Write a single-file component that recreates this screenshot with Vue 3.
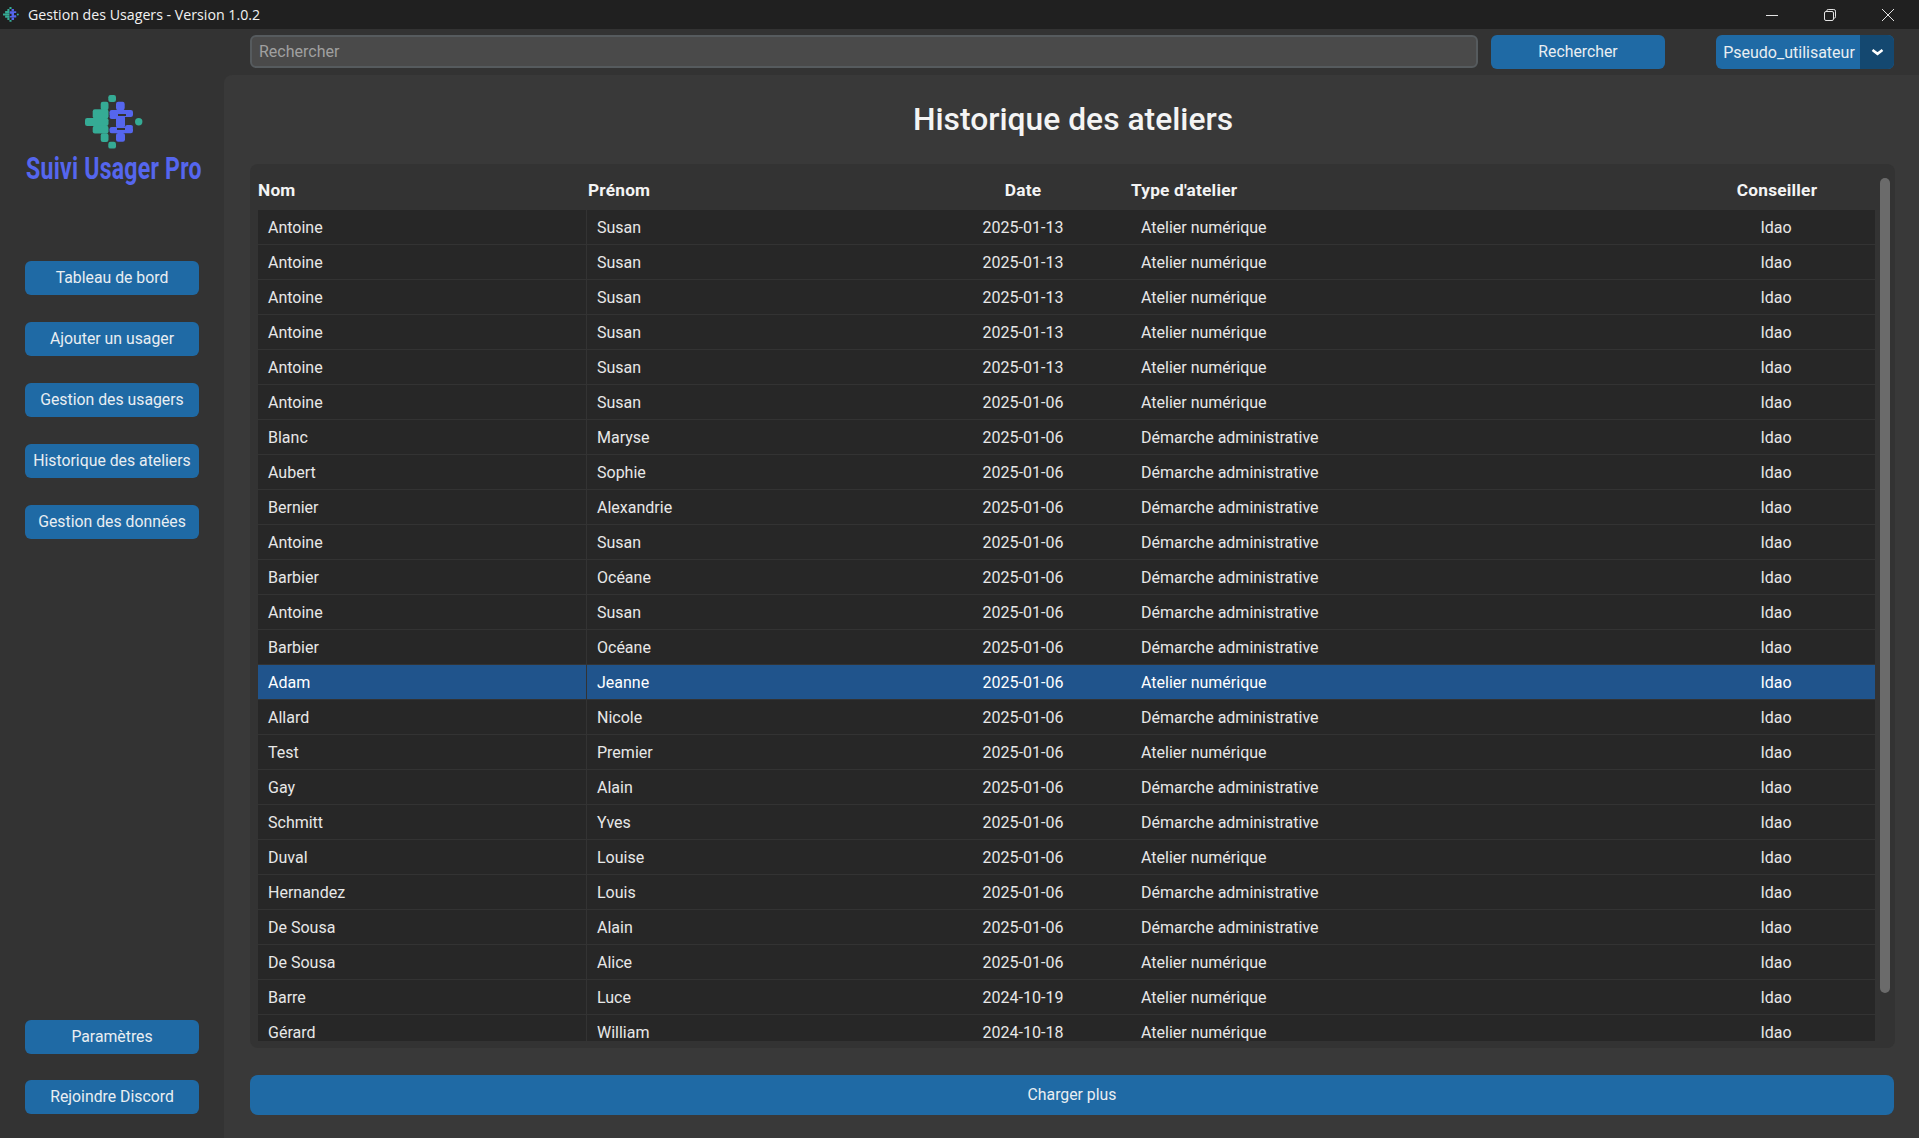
<template>
  <div class="window">
    <div class="titlebar">
      <svg class="app-icon" viewBox="0 0 58 54">
        <rect v-for="(r, i) in logoGreen" :key="i" :x="r[0]" :y="r[1]" :width="r[2]" :height="r[3]" rx="1" fill="#35ab95" />
        <circle cx="53.7" cy="26.7" r="3.7" fill="#35ab95" />
        <rect v-for="(r, i) in logoBlue" :key="i" :x="r[0]" :y="r[1]" :width="r[2]" :height="r[3]" rx="1" fill="#5566ee" />
      </svg>
      <span class="win-title">Gestion des Usagers - Version 1.0.2</span>
      <div class="win-controls">
        <svg viewBox="0 0 12 12" class="ctrl"><path d="M0 6.5h12" /></svg>
        <svg viewBox="0 0 12 12" class="ctrl"><rect x="0.5" y="2.5" width="9" height="9" rx="1.5" /><path d="M2.8 2.3V1.8Q2.8.5 4.2.5h5.6q1.7 0 1.7 1.7v5.6q0 1.4-1.3 1.4" /></svg>
        <svg viewBox="0 0 12 12" class="ctrl"><path d="M0 0l12 12M12 0L0 12" /></svg>
      </div>
    </div>

    <div class="body">
      <aside class="sidebar">
        <div class="brand">
          <svg class="logo" viewBox="0 0 58 54">
            <rect v-for="(r, i) in logoGreen" :key="i" :x="r[0]" :y="r[1]" :width="r[2]" :height="r[3]" rx="2.2" fill="#35ab95" />
            <circle cx="53.7" cy="26.7" r="3.7" fill="#35ab95" />
            <rect v-for="(r, i) in logoBlue" :key="i" :x="r[0]" :y="r[1]" :width="r[2]" :height="r[3]" rx="2.2" fill="#5566ee" />
            <path d="M33 20h8M32 34h8" stroke="#333333" stroke-width="2" />
          </svg>
          <div class="brand-name">Suivi Usager Pro</div>
        </div>

        <nav class="nav">
          <button v-for="b in navTop" :key="b" class="btn side-btn">{{ b }}</button>
        </nav>

        <div class="nav-bottom">
          <button v-for="b in navBottom" :key="b" class="btn side-btn">{{ b }}</button>
        </div>
      </aside>

      <div class="content">
        <div class="topbar">
          <input class="search" type="text" placeholder="Rechercher" />
          <button class="btn search-btn">Rechercher</button>
          <div class="user-menu">
            <span class="user-name">Pseudo_utilisateur</span>
            <span class="user-arrow">
              <svg viewBox="0 0 13 9"><path d="M1.5 2l5 3.8 5-3.8" /></svg>
            </span>
          </div>
        </div>

        <main class="panel">
          <h1>Historique des ateliers</h1>

          <div class="table-frame">
            <div class="table-wrap">
              <div class="thead">
                <div class="th">Nom</div>
                <div class="th">Prénom</div>
                <div class="th center">Date</div>
                <div class="th">Type d'atelier</div>
                <div class="th center">Conseiller</div>
              </div>
              <div class="tbody">
                <div v-for="(r, i) in rows" :key="i" class="tr" :class="{ selected: i === 13 }">
                  <div class="td">{{ r[0] }}</div>
                  <div class="td first">{{ r[1] }}</div>
                  <div class="td center">{{ r[2] }}</div>
                  <div class="td">{{ r[3] === 'N' ? 'Atelier numérique' : 'Démarche administrative' }}</div>
                  <div class="td center">Idao</div>
                </div>
              </div>
            </div>
            <div class="scrollbar"><div class="thumb"></div></div>
          </div>

          <button class="btn load-more">Charger plus</button>
        </main>
      </div>
    </div>
  </div>
</template>

<script setup>
const navTop = ['Tableau de bord', 'Ajouter un usager', 'Gestion des usagers', 'Historique des ateliers', 'Gestion des données']
const navBottom = ['Paramètres', 'Rejoindre Discord']

// x, y, w, h of the logo blocks
const logoGreen = [
  [23.3, 0, 7.7, 6.9],
  [15.7, 6.7, 7.8, 8.4],
  [7.7, 14.3, 15.8, 9.2],
  [0, 23, 23.5, 8],
  [7.7, 30.7, 15.8, 7.8],
  [15.7, 38.3, 7.8, 8.6],
  [23.3, 46.7, 7.7, 6.9],
]
const logoBlue = [
  [31, 6.7, 8.7, 8.6],
  [24.5, 15, 23.5, 7],
  [24.5, 20, 8, 4],
  [31, 20, 9, 13],
  [40, 30, 8, 4],
  [24.5, 32, 23.5, 6.3],
  [31, 38, 9, 8.7],
]

const rows = [
  ['Antoine', 'Susan', '2025-01-13', 'N'],
  ['Antoine', 'Susan', '2025-01-13', 'N'],
  ['Antoine', 'Susan', '2025-01-13', 'N'],
  ['Antoine', 'Susan', '2025-01-13', 'N'],
  ['Antoine', 'Susan', '2025-01-13', 'N'],
  ['Antoine', 'Susan', '2025-01-06', 'N'],
  ['Blanc', 'Maryse', '2025-01-06', 'D'],
  ['Aubert', 'Sophie', '2025-01-06', 'D'],
  ['Bernier', 'Alexandrie', '2025-01-06', 'D'],
  ['Antoine', 'Susan', '2025-01-06', 'D'],
  ['Barbier', 'Océane', '2025-01-06', 'D'],
  ['Antoine', 'Susan', '2025-01-06', 'D'],
  ['Barbier', 'Océane', '2025-01-06', 'D'],
  ['Adam', 'Jeanne', '2025-01-06', 'N'],
  ['Allard', 'Nicole', '2025-01-06', 'D'],
  ['Test', 'Premier', '2025-01-06', 'N'],
  ['Gay', 'Alain', '2025-01-06', 'D'],
  ['Schmitt', 'Yves', '2025-01-06', 'D'],
  ['Duval', 'Louise', '2025-01-06', 'N'],
  ['Hernandez', 'Louis', '2025-01-06', 'D'],
  ['De Sousa', 'Alain', '2025-01-06', 'D'],
  ['De Sousa', 'Alice', '2025-01-06', 'N'],
  ['Barre', 'Luce', '2024-10-19', 'N'],
  ['Gérard', 'William', '2024-10-18', 'N'],
]
</script>

<style>
html, body { margin: 0; background: #333333; overflow: hidden; }
</style>

<style scoped>
.window { width: 1919px; height: 1138px; display: flex; flex-direction: column; background: #333333; color: #e8e8e8; font-family: Roboto, "Liberation Sans", sans-serif; font-size: 16px; }

.titlebar { height: 29px; flex: none; display: flex; align-items: center; background: #202020; }
.app-icon { width: 16px; height: 15px; margin-left: 3px; }
.win-title { margin-left: 9px; font-family: "Open Sans", "Noto Sans", sans-serif; font-size: 14.2px; color: #f2f2f2; }
.win-controls { margin-left: auto; display: flex; align-items: center; gap: 46px; padding-right: 25px; }
.ctrl { width: 12px; height: 12px; fill: none; stroke: #e4e4e4; stroke-width: 1; }

.body { flex: 1; display: flex; min-height: 0; }

.btn { border: none; border-radius: 6px; background: #1f6aa5; color: #e9eef2; font-family: inherit; font-size: 15.8px; padding: 0 0 1px; }

.sidebar { width: 224px; flex: none; display: flex; flex-direction: column; padding: 66px 25px 24px; box-sizing: border-box; background: #333333; }
.brand { display: flex; flex-direction: column; align-items: center; height: 166px; }
.logo { width: 58px; height: 54px; margin-left: 3px; }
.brand-name { margin-top: 2px; margin-left: 3px; font-size: 31px; line-height: 36px; font-weight: 700; letter-spacing: 0.3px; color: #5566ee; white-space: nowrap; transform: scaleX(0.745); }
.nav { display: flex; flex-direction: column; gap: 27px; }
.side-btn { width: 174px; height: 34px; }
.nav-bottom { margin-top: auto; display: flex; flex-direction: column; gap: 26px; }

.content { flex: 1; min-width: 0; display: flex; flex-direction: column; }
.topbar { height: 46px; flex: none; display: flex; align-items: flex-start; padding: 6px 25px 0 26px; box-sizing: border-box; }
.search { flex: 1; min-width: 0; height: 33px; box-sizing: border-box; padding: 0 7px; border: 2px solid #565b5e; border-radius: 6px; background: #4a4a4a; color: #ddd; font-family: inherit; font-size: 16px; outline: none; }
.search::placeholder { color: #a0a0a0; opacity: 1; }
.search-btn { width: 174px; height: 34px; margin-left: 13px; }
.user-menu { width: 178px; height: 34px; margin-left: 51px; display: flex; border-radius: 6px; overflow: hidden; background: #1f6aa5; color: #e9eef2; }
.user-name { width: 144px; padding-left: 2px; box-sizing: border-box; line-height: 35px; text-align: center; white-space: nowrap; }
.user-arrow { flex: 1; display: flex; align-items: center; justify-content: center; background: #144870; }
.user-arrow svg { width: 13px; height: 9px; fill: none; stroke: #fff; stroke-width: 2.6; }

.panel { flex: 1; min-height: 0; display: flex; flex-direction: column; padding: 0 25px 23px 26px; background: #393939; border-top-left-radius: 8px; }
h1 { margin: 0; height: 89px; padding-left: 2px; line-height: 88px; text-align: center; font-size: 31.8px; font-weight: 500; color: #f4f4f4; }

.table-frame { height: 884px; flex: none; display: flex; box-sizing: border-box; margin-right: -1px; padding: 0 5px 7px 8px; background: #333333; border-radius: 8px; }
.table-wrap { flex: 1; min-width: 0; display: flex; flex-direction: column; }
.thead, .tr { display: grid; grid-template-columns: 329px 328px 216px 546px 198px; }
.thead { height: 46px; flex: none; align-items: end; padding-bottom: 10px; box-sizing: border-box; }
.th { font-weight: 700; color: #f4f4f4; font-size: 17.3px; letter-spacing: 0.2px; line-height: 20px; }
.th:nth-child(2) { padding-left: 1px; }
.th:last-child { padding-left: 2px; }
.tbody { flex: 1; min-height: 0; overflow: hidden; background: #272727; }
.tr { height: 35px; box-sizing: border-box; border-bottom: 1px solid #333333; }
.td { line-height: 35px; padding-left: 10px; white-space: nowrap; color: #e8e8e8; }
.td.first { border-left: 1px solid #333333; margin-left: -1px; }
.center { text-align: center; padding-left: 0; }
.tr.selected { background: #20548c; }
.tr.selected .td { color: #fff; }

.scrollbar { width: 10px; margin-left: 5px; padding-top: 14px; }
.thumb { height: 815px; border-radius: 5px; background: #6b6b6b; }

.load-more { height: 40px; flex: none; margin-top: 27px; border-radius: 8px; }
</style>
